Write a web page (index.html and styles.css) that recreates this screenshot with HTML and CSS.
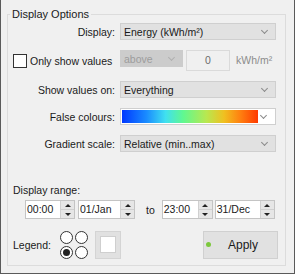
FILE: index.html
```html
<!doctype html>
<html>
<head>
<title>Display Options</title>
<link rel="stylesheet" href="styles.css">
</head>
<body>
<div id="frame">
    <fieldset class="group">
        <legend>Display Options</legend>

        <div class="form">
            <span class="lbl">Display:</span>
            <div class="combo"><span>Energy (kWh/m²)</span><i class="chev"></i></div>

            <label class="check"><span class="box"></span>Only show values</label>
            <div class="inline">
                <div class="combo off"><span>above</span><i class="chev"></i></div>
                <div class="num">0</div>
                <span class="unit">kWh/m²</span>
            </div>

            <span class="lbl">Show values on:</span>
            <div class="combo"><span>Everything</span><i class="chev"></i></div>

            <span class="lbl">False colours:</span>
            <div class="combo grad"><span class="ramp"></span><i class="chev"></i></div>

            <span class="lbl">Gradient scale:</span>
            <div class="combo"><span>Relative (min..max)</span><i class="chev"></i></div>
        </div>

        <div class="range-title">Display range:</div>
        <div class="range">
            <div class="spin w50"><span>00:00</span><b><i class="up"></i><i class="dn"></i></b></div>
            <div class="spin w57"><span>01/Jan</span><b><i class="up"></i><i class="dn"></i></b></div>
            <span class="to">to</span>
            <div class="spin w51"><span>23:00</span><b><i class="up"></i><i class="dn"></i></b></div>
            <div class="spin w60"><span>31/Dec</span><b><i class="up"></i><i class="dn"></i></b></div>
        </div>

        <div class="legend-row">
            <span class="lbl-left">Legend:</span>
            <div class="radios">
                <i class="radio"></i><i class="radio"></i>
                <i class="radio on"></i><i class="radio"></i>
            </div>
            <div class="swatch"><span></span></div>
            <div class="apply"><i class="dot"></i>Apply</div>
        </div>
    </fieldset>
</div>
</body>
</html>
```

FILE: styles.css
```css
*{
    margin:0;
    padding:0;
    box-sizing:border-box;
}
body{
    background:#f0f0f0;
    font-family:"Liberation Sans",Arial,sans-serif;
    font-size:10.5px;
    color:#1a1a1a;
}

#frame{
    width:295px;
    height:274px;
    border-left:1px solid #5a5a5a;
    border-right:1px solid #5a5a5a;
    border-bottom:1px solid #5a5a5a;
    padding:8px 0 0 6px;
}

.group{
    width:279px;
    height:258px;
    border:1px solid #dcdcdc;
    padding:2px 0 0 0;
}
.group legend{
    margin-left:2px;
    padding:0 2px;
    line-height:13px;
    font-size:11px;
}

.form{
    display:grid;
    grid-template-columns:107px 156px;
    grid-template-rows:17px 21px 17px 17px 17px;
    column-gap:5px;
    row-gap:10px;
    align-items:center;
}
.lbl{
    text-align:right;
}

.combo{
    height:17px;
    background:#e1e1e1;
    border:1px solid #cfcfcf;
    display:flex;
    align-items:center;
    padding-left:3px;
}
.combo span{
    flex:1;
    white-space:nowrap;
}
.chev{
    width:5px;
    height:5px;
    border-right:1px solid #8a8a8a;
    border-bottom:1px solid #8a8a8a;
    transform:rotate(45deg);
    margin:0 8px 3px 0;
}
.combo.off{
    width:63px;
    background:#cccccc;
    border-color:#cccccc;
    color:#9c9c9c;
}
.combo.off .chev{
    border-color:#b0b0b0;
}
.combo.grad{
    background:#fff;
    border-color:#cfcfcf;
    padding:1px;
}
.combo.grad .ramp{
    align-self:stretch;
    flex:0 0 136px;
    background:linear-gradient(to right,#0038ff 0%,#1a8cff 18%,#40e0f0 32%,#60f890 45%,#b8e850 62%,#f0c020 75%,#ff8010 87%,#ff3a00 100%);
}
.combo.grad .chev{
    margin-left:auto;
}

.check{
    display:flex;
    align-items:center;
    padding-left:5px;
    white-space:nowrap;
}
.check .box{
    flex:0 0 14px;
    height:14px;
    border:1px solid #333;
    background:#fff;
    margin-right:3px;
}
.inline{
    display:flex;
    align-items:flex-start;
    height:21px;
}
.num{
    width:44px;
    height:21px;
    margin-left:3px;
    border:1px solid #dadada;
    text-align:center;
    line-height:19px;
    color:#6d6d6d;
}
.unit{
    margin:4px 0 0 6px;
    color:#8c8c8c;
}

.range-title{
    margin:30px 0 0 5px;
    line-height:16px;
}
.range{
    display:flex;
    align-items:center;
    margin:2px 0 0 17px;
    height:19px;
}
.spin{
    height:19px;
    display:flex;
    border:1px solid #c4c4c4;
    background:#fff;
}
.spin span{
    flex:1;
    line-height:17px;
    padding-left:1px;
}
.spin b{
    width:14px;
    display:flex;
    flex-direction:column;
    background:#e6e6e6;
    border-left:1px solid #d0d0d0;
}
.spin b i{
    flex:1;
    display:flex;
    align-items:center;
    justify-content:center;
}
.spin b i.up{
    border-bottom:1px solid #d0d0d0;
}
.spin b i::after{
    content:"";
    border-left:3px solid transparent;
    border-right:3px solid transparent;
}
.spin b i.up::after{
    border-bottom:3px solid #222;
}
.spin b i.dn::after{
    border-top:3px solid #222;
}
.w50{ width:50px; }
.w57{ width:57px; margin-left:3px; }
.w51{ width:51px; }
.w60{ width:60px; margin-left:2px; }
.to{
    margin:0 7px 0 11px;
}

.legend-row{
    display:flex;
    align-items:center;
    margin:11px 0 0 5px;
    height:29px;
}
.lbl-left{
    width:47px;
}
.radios{
    display:grid;
    grid-template-columns:13px 13px;
    column-gap:2px;
    row-gap:2px;
}
.radio{
    width:13px;
    height:13px;
    border:1px solid #333;
    border-radius:50%;
    background:#fff;
    display:flex;
    align-items:center;
    justify-content:center;
}
.radio.on::after{
    content:"";
    width:7px;
    height:7px;
    border-radius:50%;
    background:#222;
}
.swatch{
    width:26px;
    height:28px;
    margin-left:7px;
    background:#e1e1e1;
    border:1px solid #d4d4d4;
    display:flex;
    align-items:center;
    justify-content:center;
}
.swatch span{
    width:16px;
    height:17px;
    background:#fff;
    border:1px solid #cfcfcf;
}
.apply{
    margin-left:auto;
    margin-right:7px;
    width:75px;
    height:28px;
    background:#e1e1e1;
    border:1px solid #d0d0d0;
    display:flex;
    align-items:center;
    font-size:12px;
}
.dot{
    width:5px;
    height:5px;
    border-radius:50%;
    background:#7cc83c;
    margin:0 17px 0 2px;
}
```
